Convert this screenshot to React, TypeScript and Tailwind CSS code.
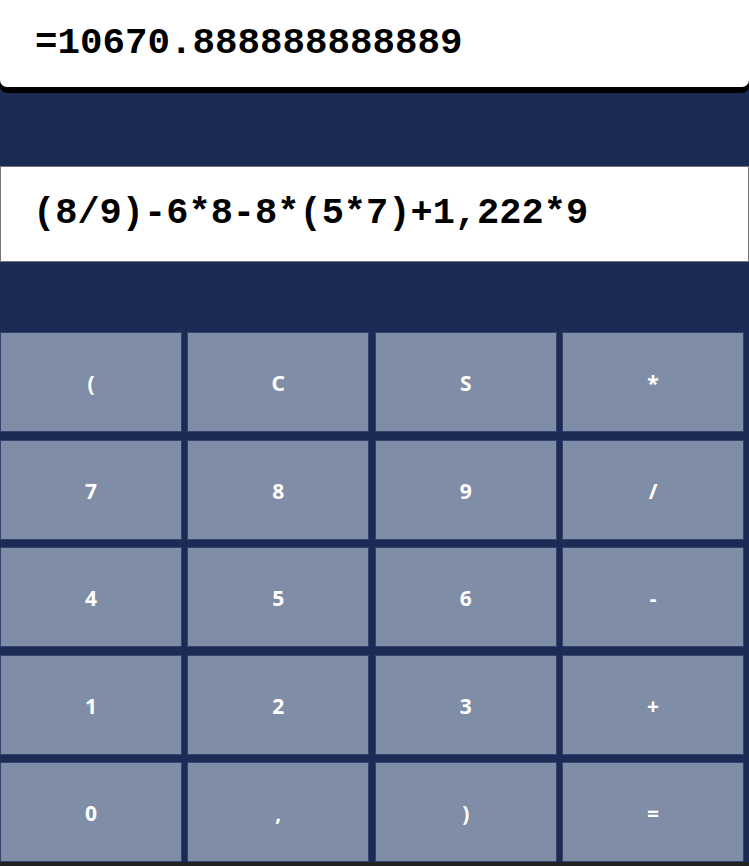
import React from 'react';

const KEYS = ['(', 'C', 'S', '*', '7', '8', '9', '/', '4', '5', '6', '-', '1', '2', '3', '+', '0', ',', ')', '='];

const App: React.FC = () => {
  return (
    <div className="min-h-screen bg-[#222222]">
      <div className="bg-[#1c2a56]">
        {/* Result display */}
        <div className="flex h-[87px] items-center rounded-b-[7px] bg-white pl-[35px] shadow-[0_6px_0_#000]">
          <span className="font-['Liberation_Mono',monospace] text-[37.5px] font-bold text-black">=10670.888888888889</span>
        </div>

        {/* Expression input */}
        <div className="mt-[79px] flex h-[96px] items-center border border-[#777] bg-white pl-[32px]">
          <span className="font-['Liberation_Mono',monospace] text-[37px] font-bold text-black">(8/9)-6*8-8*(5*7)+1,222*9</span>
        </div>

        {/* Keypad */}
        <div className="mt-[70px] grid grid-cols-4 gap-x-[5.5px] gap-y-[7.5px] pr-[5px]">
          {KEYS.map((k) => (
            <button
              key={k}
              className="flex h-[100px] items-center justify-center border border-[#34436e] bg-[#7f8ea6] pt-[4px] font-['Noto_Sans',sans-serif] text-[21px] font-bold text-white"
            >
              {k}
            </button>
          ))}
        </div>
      </div>
    </div>
  );
};

export default App;
